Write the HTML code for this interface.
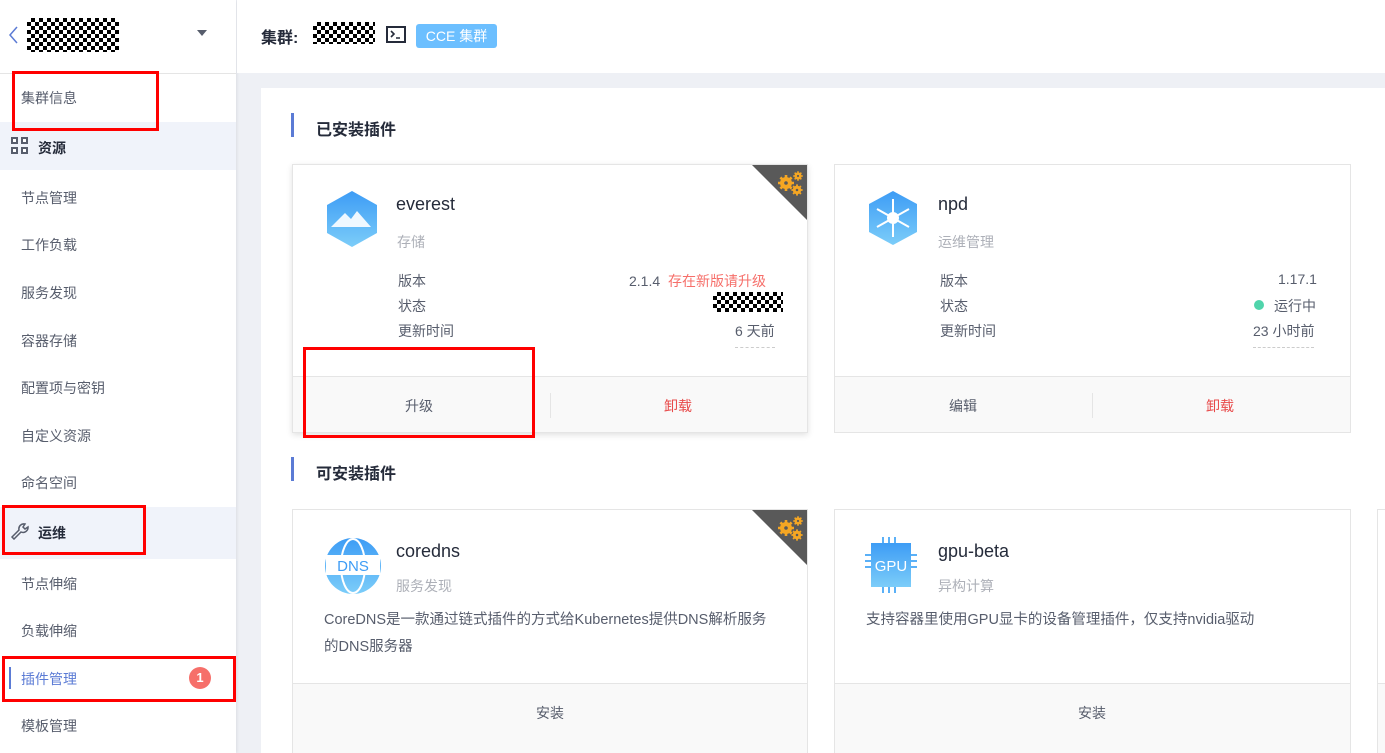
<!DOCTYPE html>
<html><head><meta charset="utf-8"><style>
*{margin:0;padding:0;box-sizing:border-box}
html,body{width:1385px;height:753px;overflow:hidden}
body{background:#eef0f5;font-family:"Liberation Sans","Noto Sans CJK SC",sans-serif;color:#252b3a;position:relative;font-size:14px}
.abs{position:absolute}
.side{left:0;top:0;width:236px;height:753px;background:#fff;box-shadow:1px 0 3px rgba(0,0,0,.08)}
.top{left:237px;top:0;width:1148px;height:73px;background:#fff}
.chk{background:repeating-conic-gradient(#000 0 25%,#fff 0 50%) 0 0/8px 8px}
.item{position:absolute;left:21px;font-size:14px;color:#575d6c}
.grp{position:absolute;left:0;width:236px;background:#f0f3fa}
.red{position:absolute;border:3px solid #f00}
.panel{left:261px;top:88px;width:1124px;height:665px;background:#fff}
.h{position:absolute;font-size:16px;font-weight:bold;color:#252b3a}
.h:before{content:"";position:absolute;left:-25px;top:-3px;width:3px;height:24px;background:#5b7bd5}
.card{position:absolute;background:#fff;border:1px solid #e5e5e5;overflow:hidden}
.foot{position:absolute;left:0;right:0;height:58px;background:#f9f9f9;border-top:1px solid #e5e5e5}
.foot span{position:absolute;top:19px;font-size:14px}
.name{position:absolute;font-size:18px;color:#252b3a}
.sub{position:absolute;font-size:14px;color:#adb0b8}
.lab{position:absolute;font-size:14px;color:#575d6c}
.tri{position:absolute;right:0;top:0;width:0;height:0;border-top:55px solid #595959;border-left:55px solid transparent}
</style></head><body>
<div class="abs side">
  <svg class="abs" style="left:7px;top:25px" width="12" height="20"><path d="M10 2 L3 10 L10 18" stroke="#5b7bd5" stroke-width="1.5" fill="none"/></svg>
  <div class="abs chk" style="left:27px;top:18px;width:92px;height:34px"></div>
  <svg class="abs" style="left:196px;top:29px" width="12" height="8"><path d="M1 1h10L6 7z" fill="#575d6c"/></svg>
  <div class="abs" style="left:0;top:73px;width:236px;height:1px;background:#e5e5e5"></div>
  <div class="item" style="top:88px">集群信息</div>
  <div class="grp" style="top:122px;height:48px"></div>
  <svg class="abs" style="left:11px;top:137px" width="18" height="18"><g fill="#575d6c"><rect x="0" y="0" width="7" height="7"/><rect x="10" y="0" width="7" height="7"/><rect x="0" y="10" width="7" height="7"/><rect x="10" y="10" width="7" height="7"/></g><g fill="#fff"><rect x="2" y="2" width="3" height="3"/><rect x="12" y="2" width="3" height="3"/><rect x="2" y="12" width="3" height="3"/><rect x="12" y="12" width="3" height="3"/></g></svg>
  <div class="item" style="top:138px;left:38px;font-weight:bold;color:#252b3a">资源</div>
  <div class="item" style="top:188px">节点管理</div>
  <div class="item" style="top:235px">工作负载</div>
  <div class="item" style="top:283px">服务发现</div>
  <div class="item" style="top:331px">容器存储</div>
  <div class="item" style="top:378px">配置项与密钥</div>
  <div class="item" style="top:426px">自定义资源</div>
  <div class="item" style="top:473px">命名空间</div>
  <div class="grp" style="top:507px;height:52px"></div>
  <svg class="abs" style="left:10px;top:522px" width="20" height="18"><path d="M2 15 L9 8 A5 5 0 0 1 15 2 L13 5 L15 7 L18 5 A5 5 0 0 1 11 10 L4 17 Z" stroke="#575d6c" stroke-width="1.5" fill="none"/></svg>
  <div class="item" style="top:523px;left:38px;font-weight:bold;color:#252b3a">运维</div>
  <div class="item" style="top:574px">节点伸缩</div>
  <div class="item" style="top:621px">负载伸缩</div>
  <div class="abs" style="left:9px;top:667px;width:2px;height:22px;background:#5b7bd5"></div>
  <div class="item" style="top:669px;color:#5b7bd5">插件管理</div>
  <div class="abs" style="left:189px;top:667px;width:22px;height:22px;border-radius:50%;background:#f66f6a;color:#fff;font-size:13px;font-weight:bold;text-align:center;line-height:22px">1</div>
  <div class="item" style="top:716px">模板管理</div>
</div>
<div class="red" style="left:12px;top:71px;width:147px;height:60px"></div>
<div class="red" style="left:2px;top:505px;width:144px;height:50px"></div>
<div class="red" style="left:2px;top:656px;width:234px;height:46px"></div>

<div class="abs top">
  <div class="abs" style="left:24px;top:24px;font-size:16px;font-weight:bold">集群:</div>
  <div class="abs chk" style="left:76px;top:22px;width:62px;height:22px"></div>
  <svg class="abs" style="left:149px;top:26px" width="20" height="18"><rect x="1" y="1" width="18" height="15" fill="none" stroke="#252b3a" stroke-width="2"/><path d="M5 5l3 3-3 3M10 12h4" stroke="#252b3a" stroke-width="1.6" fill="none"/></svg>
  <div class="abs" style="left:179px;top:24px;width:81px;height:24px;background:#6cbfff;border-radius:3px;color:#fff;font-size:14px;line-height:24px;text-align:center">CCE 集群</div>
</div>

<div class="abs panel"></div>
<div class="h" style="left:316px;top:116px">已安装插件</div>
<div class="h" style="left:316px;top:460px">可安装插件</div>

<svg width="0" height="0" style="position:absolute"><defs>
<g id="gear"><circle cx="0" cy="0" r="4.5" fill="none" stroke="#f5a623" stroke-width="3"/><g stroke="#f5a623" stroke-width="2.6"><path d="M0-8V8M-8 0H8M-5.6-5.6L5.6 5.6M5.6-5.6L-5.6 5.6"/></g><circle r="1.8" fill="#595959"/></g>
</defs></svg>

<!-- card 1 -->
<div class="card" style="left:292px;top:164px;width:516px;height:269px;box-shadow:0 2px 6px rgba(0,0,0,.12)">
  <div class="tri"></div>
  <svg class="abs" style="right:2px;top:4px" width="30" height="30"><use href="#gear" x="11" y="14"/><use href="#gear" transform="translate(22 21) scale(.7)"/><use href="#gear" transform="translate(23 7) scale(.6)"/></svg>
  <svg class="abs" style="left:32px;top:24px" width="54" height="60"><defs><linearGradient id="g1" x1="0" y1="0" x2="0" y2="1"><stop offset="0" stop-color="#3d9cf5"/><stop offset="1" stop-color="#7ccdf9"/></linearGradient></defs><path d="M27 2 L52 16 L52 44 L27 58 L2 44 L2 16Z" fill="url(#g1)"/><path d="M6 38 L20 24 L26 30 L32 22 L46 38Z" fill="#fff" opacity=".9"/></svg>
  <div class="name" style="left:103px;top:29px">everest</div>
  <div class="sub" style="left:104px;top:67px">存储</div>
  <div class="lab" style="left:105px;top:106px">版本</div>
  <div class="lab" style="left:105px;top:131px">状态</div>
  <div class="lab" style="left:105px;top:156px">更新时间</div>
  <div class="lab" style="left:336px;top:106px">2.1.4 <span style="color:#f66f6a;margin-left:4px">存在新版请升级</span></div>
  <div class="abs chk" style="left:420px;top:127px;width:70px;height:20px"></div>
  <div class="lab" style="left:442px;top:156px;border-bottom:1px dashed #ccc;padding-bottom:6px">6 天前</div>
  <div class="foot" style="top:211px"><span style="left:112px;color:#575d6c">升级</span><div class="abs" style="left:257px;top:16px;width:1px;height:25px;background:#e5e5e5"></div><span style="left:371px;color:#e84a4a">卸载</span></div>
</div>
<div class="red" style="left:303px;top:347px;width:232px;height:91px"></div>

<!-- card 2 -->
<div class="card" style="left:834px;top:164px;width:517px;height:269px">
  <svg class="abs" style="left:32px;top:24px" width="52" height="58"><defs><linearGradient id="g2" x1="0" y1="0" x2="0" y2="1"><stop offset="0" stop-color="#3d9cf5"/><stop offset="1" stop-color="#7ccdf9"/></linearGradient></defs><path d="M26 2 L50 15 L50 43 L26 56 L2 43 L2 15Z" fill="url(#g2)"/><g stroke="#fff" stroke-width="2" fill="none"><path d="M26 10V48M10 20L42 38M42 20L10 38"/></g><circle cx="26" cy="29" r="6" fill="#fff"/></svg>
  <div class="name" style="left:103px;top:29px">npd</div>
  <div class="sub" style="left:103px;top:67px">运维管理</div>
  <div class="lab" style="left:105px;top:106px">版本</div>
  <div class="lab" style="left:105px;top:131px">状态</div>
  <div class="lab" style="left:105px;top:156px">更新时间</div>
  <div class="lab" style="left:443px;top:106px">1.17.1</div>
  <div class="abs" style="left:419px;top:135px;width:10px;height:10px;border-radius:50%;background:#50d4ab"></div>
  <div class="lab" style="left:439px;top:131px">运行中</div>
  <div class="lab" style="left:418px;top:156px;border-bottom:1px dashed #ccc;padding-bottom:6px">23 小时前</div>
  <div class="foot" style="top:211px"><span style="left:114px;color:#575d6c">编辑</span><div class="abs" style="left:257px;top:16px;width:1px;height:25px;background:#e5e5e5"></div><span style="left:371px;color:#e84a4a">卸载</span></div>
</div>

<!-- card 3 -->
<div class="card" style="left:292px;top:509px;width:516px;height:250px">
  <div class="tri"></div>
  <svg class="abs" style="right:2px;top:4px" width="30" height="30"><use href="#gear" x="11" y="14"/><use href="#gear" transform="translate(22 21) scale(.7)"/><use href="#gear" transform="translate(23 7) scale(.6)"/></svg>
  <svg class="abs" style="left:31px;top:27px" width="58" height="58"><defs><linearGradient id="g3" x1="0" y1="0" x2="0" y2="1"><stop offset="0" stop-color="#3d9cf5"/><stop offset="1" stop-color="#7ccdf9"/></linearGradient></defs><circle cx="29" cy="29" r="28" fill="url(#g3)"/><ellipse cx="29" cy="29" rx="12" ry="27" fill="none" stroke="#fff" stroke-width="2"/><rect x="2" y="18" width="54" height="20" fill="#fff"/><text x="29" y="34" text-anchor="middle" font-family="Liberation Sans" font-size="15" fill="#3d9cf5">DNS</text></svg>
  <div class="name" style="left:103px;top:31px">coredns</div>
  <div class="sub" style="left:103px;top:66px">服务发现</div>
  <div class="abs" style="left:31px;top:97px;width:455px;font-size:14.5px;color:#575d6c;line-height:27px">CoreDNS是一款通过链式插件的方式给Kubernetes提供DNS解析服务的DNS服务器</div>
  <div class="foot" style="top:173px;height:80px"><span style="left:243px;color:#575d6c">安装</span></div>
</div>

<!-- card 4 -->
<div class="card" style="left:834px;top:509px;width:517px;height:250px">
  <svg class="abs" style="left:30px;top:27px" width="52" height="58"><defs><linearGradient id="g4" x1="0" y1="0" x2="0" y2="1"><stop offset="0" stop-color="#3d9cf5"/><stop offset="1" stop-color="#7ccdf9"/></linearGradient></defs><g stroke="#5ab0f7" stroke-width="2"><path d="M18 0v8M24 0v8M30 0v8M18 48v8M24 48v8M30 48v8M0 18h8M0 24h8M0 30h8M44 18h8M44 24h8M44 30h8"/></g><rect x="6" y="6" width="40" height="44" fill="url(#g4)"/><text x="26" y="34" text-anchor="middle" font-family="Liberation Sans" font-size="15" fill="#fff">GPU</text></svg>
  <div class="name" style="left:103px;top:31px">gpu-beta</div>
  <div class="sub" style="left:103px;top:66px">异构计算</div>
  <div class="abs" style="left:31px;top:97px;font-size:14.5px;color:#575d6c;line-height:27px">支持容器里使用GPU显卡的设备管理插件，仅支持nvidia驱动</div>
  <div class="foot" style="top:173px;height:80px"><span style="left:243px;color:#575d6c">安装</span></div>
</div>
<div class="card" style="left:1377px;top:509px;width:40px;height:250px"><div class="foot" style="top:173px;height:80px"></div></div>
</body></html>
